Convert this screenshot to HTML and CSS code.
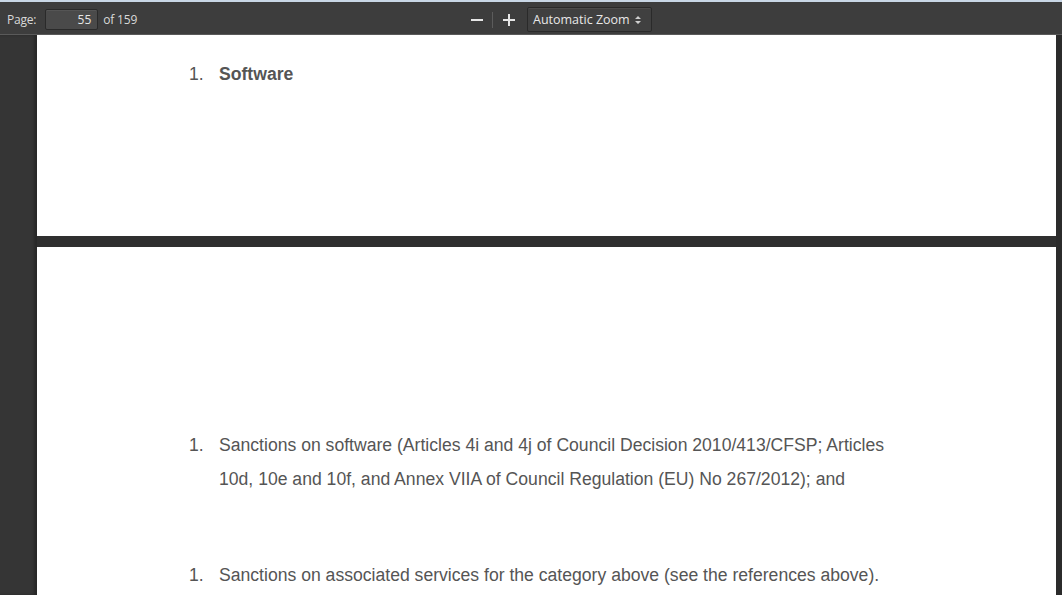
FILE: index.html
```html
<!DOCTYPE html>
<html>
<head>
<meta charset="utf-8">
<link rel="stylesheet" href="styles.css">
</head>
<body>
<div class="topline"></div>
<div class="toolbar">
  <div class="left">
    <span class="label">Page:</span>
    <span class="pageinput">55</span>
    <span class="label of">of 159</span>
  </div>
  <div class="middle">
    <span class="zbtn">
      <svg width="12" height="12" viewBox="0 0 12 12"><rect x="0" y="5" width="12" height="2" fill="#e6e6e6"/></svg>
    </span>
    <span class="sep"></span>
    <span class="zbtn">
      <svg width="12" height="12" viewBox="0 0 12 12"><rect x="0" y="5" width="12" height="2" fill="#e6e6e6"/><rect x="5" y="0" width="2" height="12" fill="#e6e6e6"/></svg>
    </span>
    <span class="select">Automatic Zoom
      <svg class="arrows" width="6" height="10" viewBox="0 0 6 10"><path d="M0 4 L3 1 L6 4 Z M0 6 L3 9 L6 6 Z" fill="#cfcfcf"/></svg>
    </span>
  </div>
</div>
<div class="viewer">
  <div class="sidebar"></div>
  <div class="pages">
    <div class="page page1">
      <div class="item bold"><span class="num">1.</span><span class="txt">Software</span></div>
    </div>
    <div class="gap"></div>
    <div class="page page2">
      <div class="item first"><span class="num">1.</span><span class="txt">Sanctions on software (Articles 4i and 4j of Council Decision 2010/413/CFSP; Articles<br>10d, 10e and 10f, and Annex VIIA of Council Regulation (EU) No 267/2012); and</span></div>
      <div class="item second"><span class="num">1.</span><span class="txt">Sanctions on associated services for the category above (see the references above).</span></div>
    </div>
  </div>
  <div class="scrollbar"></div>
</div>
</body>
</html>
```
FILE: styles.css
```css
html, body { margin: 0; padding: 0; }
body { width: 1062px; height: 595px; overflow: hidden; background: #2f2f2f; font-family: "Liberation Sans", Arial, sans-serif; }
.topline { height: 2px; background: #c9d7e6; }
.toolbar {
  height: 32px; background: #3d3d3d; border-bottom: 1px solid #5a5a5a;
  display: flex; align-items: center; position: relative;
  font-family: "Open Sans", "DejaVu Sans", sans-serif; font-size: 12px; color: #d9d9d9;
}
.left { display: flex; align-items: center; padding-left: 7px; padding-top: 2px; }
.label { letter-spacing: -0.2px; }
.pageinput {
  margin-left: 9px; width: 53px; height: 21px; box-sizing: border-box;
  background: #4a4a4a; border: 1px solid #2a2a2a; border-radius: 2px;
  box-shadow: inset 0 1px 0 #555;
  text-align: right; padding-right: 6px; line-height: 19px; color: #e6e6e6;
}
.of { margin-left: 5px; }
.middle { position: absolute; left: 471px; top: 5px; display: flex; align-items: center; }
.zbtn { width: 12px; height: 25px; display: flex; align-items: center; }
.sep { width: 1px; height: 16px; background: #5c5c5c; margin: 0 10px 0 9px; }
.select {
  margin-left: 12px; width: 125px; height: 25px; box-sizing: border-box;
  background: #404040; border: 1px solid #2a2a2a; border-radius: 2px;
  box-shadow: inset 0 1px 0 #4c4c4c;
  display: flex; align-items: center; padding-left: 5px; font-size: 12.5px; color: #e8e8e8; position: relative;
}
.arrows { position: absolute; right: 10px; top: 7px; }
.viewer { display: flex; height: 560px; overflow: hidden; }
.sidebar { width: 37px; background: #353535; box-shadow: inset -3px 0 3px rgba(0,0,0,0.25); flex: none; }
.pages { width: 1019px; flex: none; overflow: hidden; }
.scrollbar { width: 6px; background: #2b2b2b; flex: none; }
.page { background: #fff; color: #555; font-size: 17.6px; }
.page1 { height: 201px; padding-top: 22px; box-sizing: border-box; }
.gap { height: 11px; background: #2f2f2f; }
.page2 { height: 360px; padding-top: 181px; box-sizing: border-box; }
.item { display: flex; padding-left: 152px; line-height: 34px; }
.num { width: 30px; flex: none; }
.bold .txt { font-weight: bold; }
.second { margin-top: 62px; }
```
